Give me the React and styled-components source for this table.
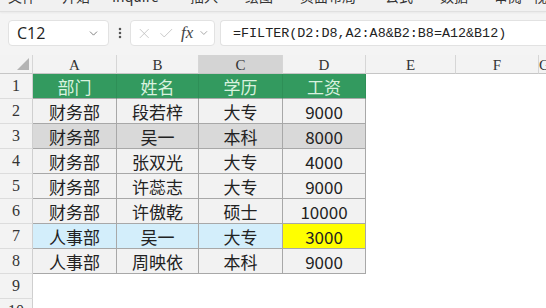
import React from "react";
import styled, { createGlobalStyle } from "styled-components";
import { ChevronDown, X, Check, EllipsisVertical } from "lucide-react";

const GlobalStyle = createGlobalStyle`
  html, body { margin: 0; padding: 0; background: #fff; overflow: hidden; }
  * { box-sizing: border-box; }
`;

const tabs = ["文件", "开始", "Inquire", "插入", "绘图", "页面布局", "公式", "数据", "审阅", "视图"];
const tabX = [8, 62, 112, 190, 245, 300, 385, 440, 494, 533];

const colWidths = [33, 84, 82, 84, 83, 90, 83];
const letters = ["A", "B", "C", "D", "E", "F", "G"];

const rows = [
  ["部门", "姓名", "学历", "工资"],
  ["财务部", "段若梓", "大专", "9000"],
  ["财务部", "吴一", "本科", "8000"],
  ["财务部", "张双光", "大专", "4000"],
  ["财务部", "许蕊志", "大专", "9000"],
  ["财务部", "许傲乾", "硕士", "10000"],
  ["人事部", "吴一", "大专", "3000"],
  ["人事部", "周映依", "本科", "9000"],
];

const fillFor = (r, c) => {
  if (r === 0) return "#339a5f";
  if (r === 2) return "#d9d9d9";
  if (r === 6) return c === 3 ? "#ffff00" : "#d3eefb";
  return "#f2f2f2";
};

const App = () => (
  <Page>
    <GlobalStyle />
    <TabStrip>
      {tabs.map((t, i) => (
        <Tab key={t} style={{ left: tabX[i] }}>{t}</Tab>
      ))}
    </TabStrip>
    <Toolbar>
      <NameBox>
        <span>C12</span>
        <ChevronDown size={13} color="#666" strokeWidth={1.5} />
      </NameBox>
      <Dots>
        <EllipsisVertical size={14} color="#555" strokeWidth={2.4} />
      </Dots>
      <FxBox>
        <X size={17} color="#bdbdbd" strokeWidth={1.2} />
        <Check size={17} color="#bdbdbd" strokeWidth={1.2} />
        <Fx>fx</Fx>
        <ChevronDown size={12} color="#888" strokeWidth={1.5} />
      </FxBox>
      <FormulaBox>=FILTER(D2:D8,A2:A8&amp;B2:B8=A12&amp;B12)</FormulaBox>
    </Toolbar>
    <Sheet>
      <Corner>
        <svg width="12" height="12" viewBox="0 0 12 12">
          <polygon points="12,0 12,12 0,12" fill="#b4b4b4" />
        </svg>
      </Corner>
      {letters.map((l, i) => (
        <ColHead key={l} $active={l === "C"} $w={colWidths[i + 1]}>{l}</ColHead>
      ))}
      {Array.from({ length: 10 }, (_, r) => (
        <React.Fragment key={r}>
          <RowHead>{r + 1}</RowHead>
          {letters.map((l, c) => {
            const inTable = r < 8 && c < 4;
            return inTable ? (
              <Cell
                key={l}
                $bg={fillFor(r, c)}
                $head={r === 0}
              >
                {rows[r][c]}
              </Cell>
            ) : (
              <Blank key={l} />
            );
          })}
        </React.Fragment>
      ))}
    </Sheet>
  </Page>
);

const Page = styled.div`
  width: 546px;
  height: 308px;
  overflow: hidden;
  background: #f4f4f4;
  font-family: "Noto Sans CJK SC", "Noto Sans", sans-serif;
`;

const TabStrip = styled.div`
  position: relative;
  height: 12px;
  overflow: hidden;
  background: #f1f1f1;
  border-bottom: 1px solid #e0e0e0;
  box-shadow: 0 1px 2px rgba(0, 0, 0, 0.05);
`;

const Tab = styled.span`
  position: absolute;
  top: -13px;
  font-size: 14px;
  line-height: 18px;
  color: #333;
  white-space: nowrap;
`;

const Toolbar = styled.div`
  display: flex;
  align-items: center;
  height: 43px;
  padding: 8px 0 9px 8px;
`;

const Box = styled.div`
  height: 26px;
  background: #fff;
  border: 1px solid #e2e2e2;
  border-radius: 4px;
  display: flex;
  align-items: center;
`;

const NameBox = styled(Box)`
  width: 101px;
  padding: 0 8px 0 8px;
  justify-content: space-between;
  font-family: "Open Sans", "Noto Sans", sans-serif;
  font-size: 16px;
  color: #222;
`;

const Dots = styled.div`
  width: 21px;
  display: flex;
  justify-content: center;
`;

const FxBox = styled(Box)`
  width: 85px;
  padding: 0 4px 0 5px;
  gap: 5px;
`;

const Fx = styled.span`
  font-family: "Liberation Serif", serif;
  font-style: italic;
  font-size: 17px;
  color: #444;
  margin-left: 2px;
`;

const FormulaBox = styled(Box)`
  flex: 1;
  margin-left: 5px;
  border-right: none;
  border-radius: 4px 0 0 4px;
  padding-left: 12px;
  font-family: "Liberation Mono", monospace;
  font-size: 13.4px;
  color: #222;
`;

const Sheet = styled.div`
  display: grid;
  grid-template-columns: ${colWidths.map((w) => w + "px").join(" ")} 1fr;
  grid-template-rows: 19px repeat(10, 25px);
  background: #fff;
`;

const HeadBase = styled.div`
  background: #f3f3f3;
  color: #333;
  font-family: "Liberation Serif", serif;
  font-size: 15px;
  display: flex;
  align-items: center;
  justify-content: center;
`;

const Corner = styled(HeadBase)`
  border-right: 1px solid #d6d6d6;
  border-bottom: 1px solid #c6c6c6;
  justify-content: flex-end;
  align-items: flex-end;
  padding: 0 3px 3px 0;
`;

const ColHead = styled(HeadBase)`
  background: ${(p) => (p.$active ? "#d4d4d4" : "#f3f3f3")};
  border-right: 1px solid #d6d6d6;
  border-bottom: 1px solid #c6c6c6;
  line-height: 1;
  padding-top: 2px;
`;

const RowHead = styled(HeadBase)`
  border-right: 1px solid #cfcfcf;
  border-bottom: 1px solid #dcdcdc;
  font-size: 16px;
`;

const Cell = styled.div`
  background: ${(p) => p.$bg};
  color: ${(p) => (p.$head ? "#d9f2df" : "#222")};
  border-right: 1px solid ${(p) => (p.$head ? "#2e8f57" : "#a8a8a8")};
  border-bottom: 1px solid #a8a8a8;
  display: flex;
  align-items: center;
  justify-content: center;
  font-size: 17px;
  line-height: 1;
  padding-top: 1px;
`;

const Blank = styled.div`
  background: #fff;
`;

export default App;
